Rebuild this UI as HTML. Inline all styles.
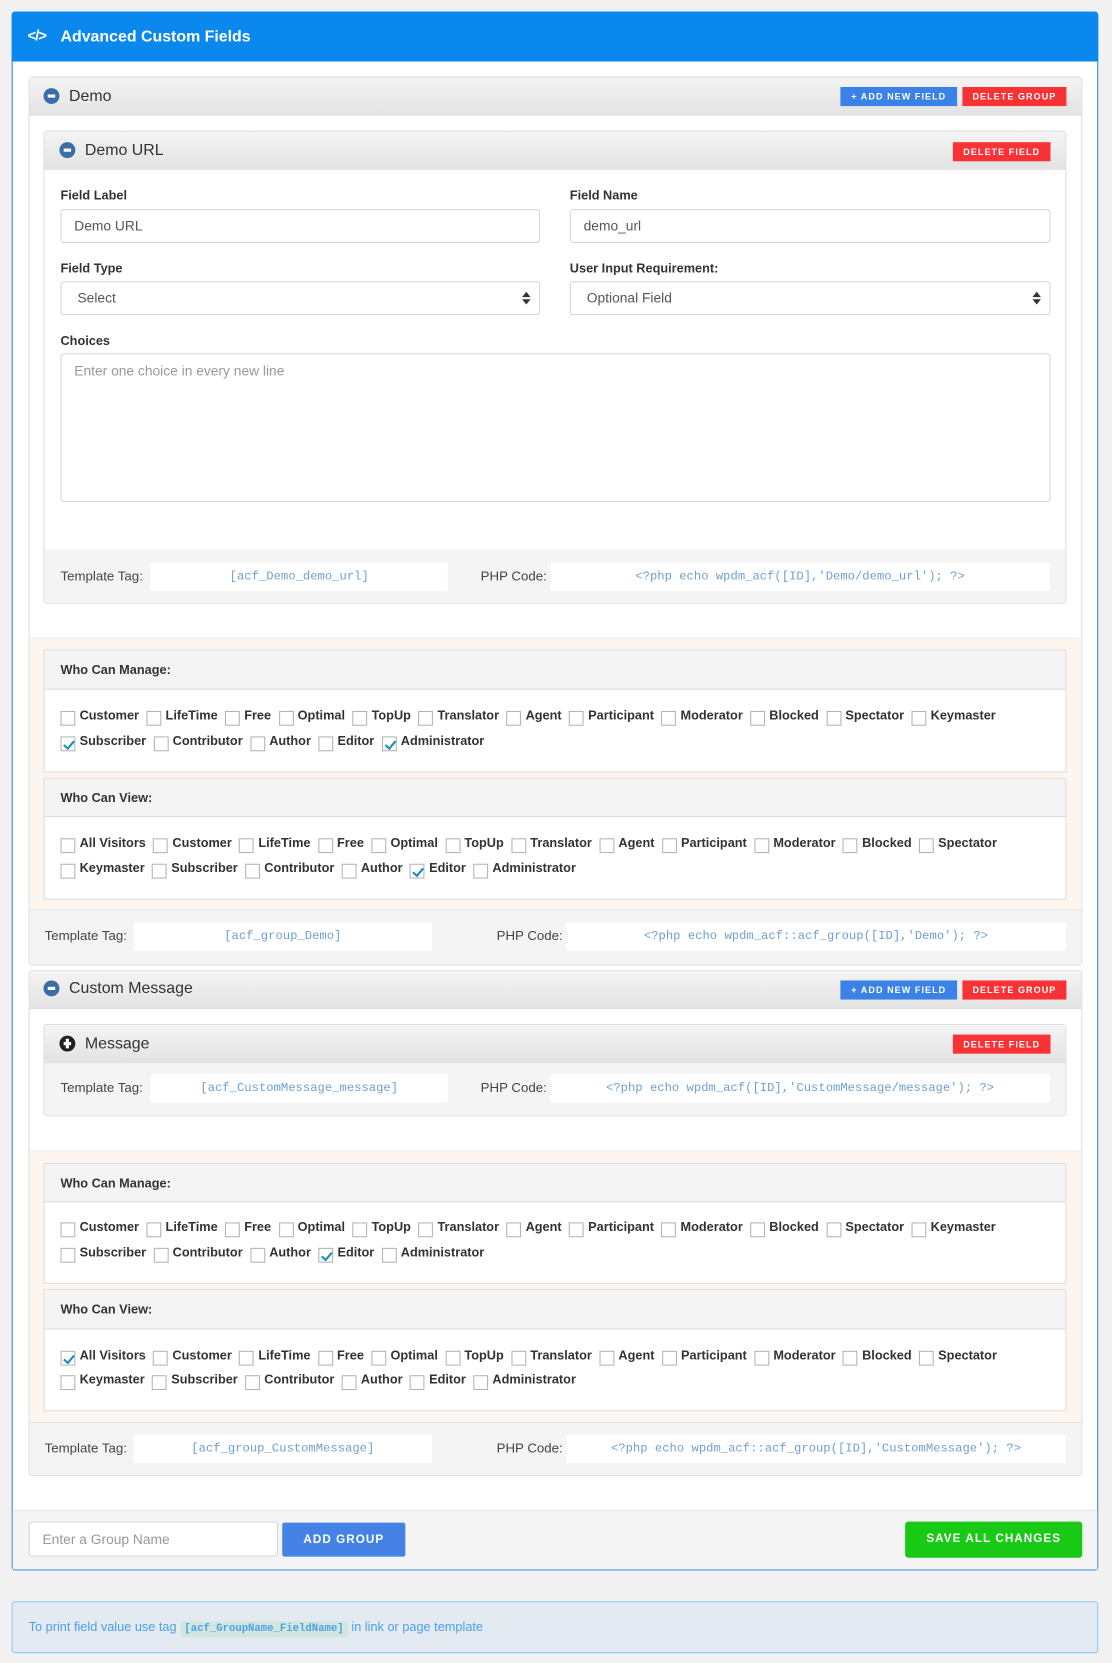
<!DOCTYPE html>
<html><head><meta charset="utf-8"><style>
*{box-sizing:border-box;margin:0;padding:0}
html,body{width:1112px;height:1663px;overflow:hidden;background:#f1f1f1;font-family:"Liberation Sans",Arial,sans-serif;color:#333}
#w{position:absolute;left:0;top:0;width:1048px;height:1567px;transform:scale(1.0611);transform-origin:0 0}
.a{position:absolute}
.main{left:11px;top:11px;width:1024px;height:1469px;background:#fff;border:1px solid #2d86d6;border-radius:3px}
.hdr{left:11px;top:11px;width:1024px;height:47px;background:#0a88ed;border-radius:3px 3px 0 0;color:#fff;font-weight:bold;font-size:15px;line-height:47px;padding-left:46px}
.grp{background:#fff;border:1px solid #ddd;border-radius:3px}
.gh{background:linear-gradient(#f4f4f4,#e3e3e3);border-bottom:1px solid #ddd}
.title{font-size:15px;color:#333}
.ico{width:15px;height:15px;border-radius:50%;background:#3a6ea5}
.ico:after{content:"";position:absolute;left:4px;top:6px;width:7px;height:3px;background:#fff}
.btn{color:#fff;font-weight:bold;font-size:8.5px;letter-spacing:1px;text-align:center;line-height:18px;height:18px}
.blue{background:#3b82e6}.red{background:#f93236}
.lbl{font-weight:bold;font-size:12px;color:#333}
.inp{border:1px solid #d6d6d6;border-radius:3px;background:#fff;font-size:13px;color:#555;padding-left:12px;line-height:30px}
.bar{background:#f4f4f4}
.tl{font-size:12.5px;color:#444}
.cb{background:#fff;font-family:"Liberation Mono",monospace;font-size:11.5px;color:#6f9fd0;text-align:center;line-height:27px;height:27px}
.pea{background:#fdf5f0;border-top:1px solid #eee}
.pp{background:#fff;border:1px solid #ddd}
.ph{background:#f4f4f4;border-bottom:1px solid #ddd;font-weight:bold;font-size:12px;padding-left:15px}
.row{left:15px;font-weight:bold;font-size:12px;color:#333;white-space:nowrap}
.row i{display:inline-block;width:14px;height:14px;border:1px solid #b4b4b4;background:#fff;margin:0 4px 0 0;vertical-align:middle;position:relative;top:2px}
.row i.k:after{content:"";position:absolute;left:4px;top:1px;width:4px;height:8px;border:solid #1e8cbe;border-width:0 2px 2px 0;transform:rotate(40deg)}
.row b{margin-right:7px}
.arr{position:absolute;right:12px;top:9px;width:0;height:0}
.arr:before{content:"";position:absolute;left:-4px;top:0;border:4px solid transparent;border-top:0;border-bottom:5px solid #333}
.arr:after{content:"";position:absolute;left:-4px;top:7px;border:4px solid transparent;border-bottom:0;border-top:5px solid #333}
</style></head><body><div id="w">
<div class="a main"></div>
<div class="a hdr">Advanced Custom Fields</div>
<div class="a" style="left:26px;top:25px;color:#fff;font-weight:bold;font-size:14px;letter-spacing:-1px">&lt;/&gt;</div>

<div class="a grp" style="left:27px;top:72px;width:993px;height:838px;background:#fff"></div>
<div class="a gh" style="left:28px;top:73px;width:991px;height:36px"></div>
<div class="a ico" style="left:41px;top:83px"></div>
<div class="a title" style="left:65px;top:82px">Demo</div>
<div class="a btn blue" style="left:792px;top:82px;width:110px">+ ADD NEW FIELD</div>
<div class="a btn red" style="left:907px;top:82px;width:98px">DELETE GROUP</div>

<div class="a grp" style="left:41px;top:123px;width:964px;height:446px"></div>
<div class="a gh" style="left:42px;top:124px;width:962px;height:36px"></div>
<div class="a ico" style="left:56px;top:134px"></div>
<div class="a title" style="left:80px;top:133px">Demo URL</div>
<div class="a btn red" style="left:898px;top:134px;width:92px">DELETE FIELD</div>
<div class="a lbl" style="left:57px;top:177px">Field Label</div>
<div class="a lbl" style="left:537px;top:177px">Field Name</div>
<div class="a inp" style="left:57px;top:197px;width:452px;height:32px">Demo URL</div>
<div class="a inp" style="left:537px;top:197px;width:453px;height:32px">demo_url</div>
<div class="a lbl" style="left:57px;top:246px">Field Type</div>
<div class="a lbl" style="left:537px;top:246px">User Input Requirement:</div>
<div class="a inp" style="left:57px;top:265px;width:452px;height:32px;padding-left:15px">Select<div class="arr"></div></div>
<div class="a inp" style="left:537px;top:265px;width:453px;height:32px;padding-left:15px">Optional Field<div class="arr"></div></div>
<div class="a lbl" style="left:57px;top:314px">Choices</div>
<div class="a inp" style="left:57px;top:333px;width:933px;height:140px;line-height:20px;padding-top:6px;color:#999">Enter one choice in every new line</div>
<div class="a bar" style="left:42px;top:518px;width:962px;height:50px"></div>
<div class="a tl" style="left:57px;top:536px">Template Tag:</div>
<div class="a cb" style="left:142px;top:530px;width:280px">[acf_Demo_demo_url]</div>
<div class="a tl" style="left:453px;top:536px">PHP Code:</div>
<div class="a cb" style="left:519px;top:530px;width:470px">&lt;?php echo wpdm_acf([ID],'Demo/demo_url'); ?&gt;</div>

<div class="a pea" style="left:28px;top:601px;width:991px;height:256px"></div>
<div class="a pp" style="left:41px;top:612px;width:964px;height:116px"></div>
<div class="a ph" style="left:42px;top:613px;width:962px;height:37px;line-height:37px">Who Can Manage:</div>
<div class="a row" style="left:57px;top:667px"><i></i><b>Customer</b><i></i><b>LifeTime</b><i></i><b>Free</b><i></i><b>Optimal</b><i></i><b>TopUp</b><i></i><b>Translator</b><i></i><b>Agent</b><i></i><b>Participant</b><i></i><b>Moderator</b><i></i><b>Blocked</b><i></i><b>Spectator</b><i></i><b>Keymaster</b></div>
<div class="a row" style="left:57px;top:691px"><i class="k"></i><b>Subscriber</b><i></i><b>Contributor</b><i></i><b>Author</b><i></i><b>Editor</b><i class="k"></i><b>Administrator</b></div>
<div class="a pp" style="left:41px;top:733px;width:964px;height:115px"></div>
<div class="a ph" style="left:42px;top:734px;width:962px;height:36px;line-height:36px">Who Can View:</div>
<div class="a row" style="left:57px;top:787px"><i></i><b>All Visitors</b><i></i><b>Customer</b><i></i><b>LifeTime</b><i></i><b>Free</b><i></i><b>Optimal</b><i></i><b>TopUp</b><i></i><b>Translator</b><i></i><b>Agent</b><i></i><b>Participant</b><i></i><b>Moderator</b><i></i><b>Blocked</b><i></i><b>Spectator</b></div>
<div class="a row" style="left:57px;top:811px"><i></i><b>Keymaster</b><i></i><b>Subscriber</b><i></i><b>Contributor</b><i></i><b>Author</b><i class="k"></i><b>Editor</b><i></i><b>Administrator</b></div>
<div class="a bar" style="left:28px;top:857px;width:991px;height:52px;border-top:1px solid #e4e4e4"></div>
<div class="a tl" style="left:42px;top:875px">Template Tag:</div>
<div class="a cb" style="left:126px;top:869px;width:281px">[acf_group_Demo]</div>
<div class="a tl" style="left:468px;top:875px">PHP Code:</div>
<div class="a cb" style="left:534px;top:869px;width:470px">&lt;?php echo wpdm_acf::acf_group([ID],'Demo'); ?&gt;</div>

<div class="a grp" style="left:27px;top:914px;width:993px;height:477px"></div>
<div class="a gh" style="left:28px;top:915px;width:991px;height:36px"></div>
<div class="a ico" style="left:41px;top:924px"></div>
<div class="a title" style="left:65px;top:923px">Custom Message</div>
<div class="a btn blue" style="left:792px;top:924px;width:110px">+ ADD NEW FIELD</div>
<div class="a btn red" style="left:907px;top:924px;width:98px">DELETE GROUP</div>

<div class="a grp" style="left:41px;top:965px;width:964px;height:87px"></div>
<div class="a gh" style="left:42px;top:966px;width:962px;height:36px"></div>
<div class="a ico" style="left:56px;top:976px;background:#222"></div>
<div class="a" style="left:62px;top:979px;width:3px;height:9px;background:#fff"></div>
<div class="a title" style="left:80px;top:975px">Message</div>
<div class="a btn red" style="left:898px;top:975px;width:92px">DELETE FIELD</div>
<div class="a bar" style="left:42px;top:1002px;width:962px;height:49px"></div>
<div class="a tl" style="left:57px;top:1018px">Template Tag:</div>
<div class="a cb" style="left:142px;top:1012px;width:280px">[acf_CustomMessage_message]</div>
<div class="a tl" style="left:453px;top:1018px">PHP Code:</div>
<div class="a cb" style="left:519px;top:1012px;width:470px">&lt;?php echo wpdm_acf([ID],'CustomMessage/message'); ?&gt;</div>

<div class="a pea" style="left:28px;top:1084px;width:991px;height:256px"></div>
<div class="a pp" style="left:41px;top:1096px;width:964px;height:114px"></div>
<div class="a ph" style="left:42px;top:1097px;width:962px;height:36px;line-height:36px">Who Can Manage:</div>
<div class="a row" style="left:57px;top:1149px"><i></i><b>Customer</b><i></i><b>LifeTime</b><i></i><b>Free</b><i></i><b>Optimal</b><i></i><b>TopUp</b><i></i><b>Translator</b><i></i><b>Agent</b><i></i><b>Participant</b><i></i><b>Moderator</b><i></i><b>Blocked</b><i></i><b>Spectator</b><i></i><b>Keymaster</b></div>
<div class="a row" style="left:57px;top:1173px"><i></i><b>Subscriber</b><i></i><b>Contributor</b><i></i><b>Author</b><i class="k"></i><b>Editor</b><i></i><b>Administrator</b></div>
<div class="a pp" style="left:41px;top:1215px;width:964px;height:115px"></div>
<div class="a ph" style="left:42px;top:1216px;width:962px;height:37px;line-height:37px">Who Can View:</div>
<div class="a row" style="left:57px;top:1270px"><i class="k"></i><b>All Visitors</b><i></i><b>Customer</b><i></i><b>LifeTime</b><i></i><b>Free</b><i></i><b>Optimal</b><i></i><b>TopUp</b><i></i><b>Translator</b><i></i><b>Agent</b><i></i><b>Participant</b><i></i><b>Moderator</b><i></i><b>Blocked</b><i></i><b>Spectator</b></div>
<div class="a row" style="left:57px;top:1293px"><i></i><b>Keymaster</b><i></i><b>Subscriber</b><i></i><b>Contributor</b><i></i><b>Author</b><i></i><b>Editor</b><i></i><b>Administrator</b></div>
<div class="a bar" style="left:28px;top:1340px;width:991px;height:50px;border-top:1px solid #e4e4e4"></div>
<div class="a tl" style="left:42px;top:1358px">Template Tag:</div>
<div class="a cb" style="left:126px;top:1352px;width:281px">[acf_group_CustomMessage]</div>
<div class="a tl" style="left:468px;top:1358px">PHP Code:</div>
<div class="a cb" style="left:534px;top:1352px;width:470px">&lt;?php echo wpdm_acf::acf_group([ID],'CustomMessage'); ?&gt;</div>

<div class="a bar" style="left:12px;top:1423px;width:1022px;height:56px;border-top:1px solid #e4e4e4"></div>
<div class="a inp" style="left:27px;top:1434px;width:235px;height:33px;color:#999;line-height:31px">Enter a Group Name</div>
<div class="a" style="left:266px;top:1435px;width:116px;height:32px;background:#4582e6;border-radius:2px;color:#fff;font-weight:bold;font-size:11px;letter-spacing:1px;text-align:center;line-height:32px">ADD GROUP</div>
<div class="a" style="left:853px;top:1434px;width:167px;height:34px;background:#18c915;border-radius:3px;color:#fff;font-weight:bold;font-size:11px;letter-spacing:1px;text-align:center;line-height:32px">SAVE ALL CHANGES</div>

<div class="a" style="left:11px;top:1509px;width:1024px;height:49px;background:#e3eaf1;border:1px solid #90c8f3;border-radius:3px;font-size:12px;color:#4da0e8;line-height:47px;padding-left:15px">To print field value use tag <span style="background:#d2e6de;font-family:'Liberation Mono',monospace;font-weight:bold;font-size:10px;padding:2px 4px;border-radius:2px">[acf_GroupName_FieldName]</span> in link or page template</div>
</div></body></html>
